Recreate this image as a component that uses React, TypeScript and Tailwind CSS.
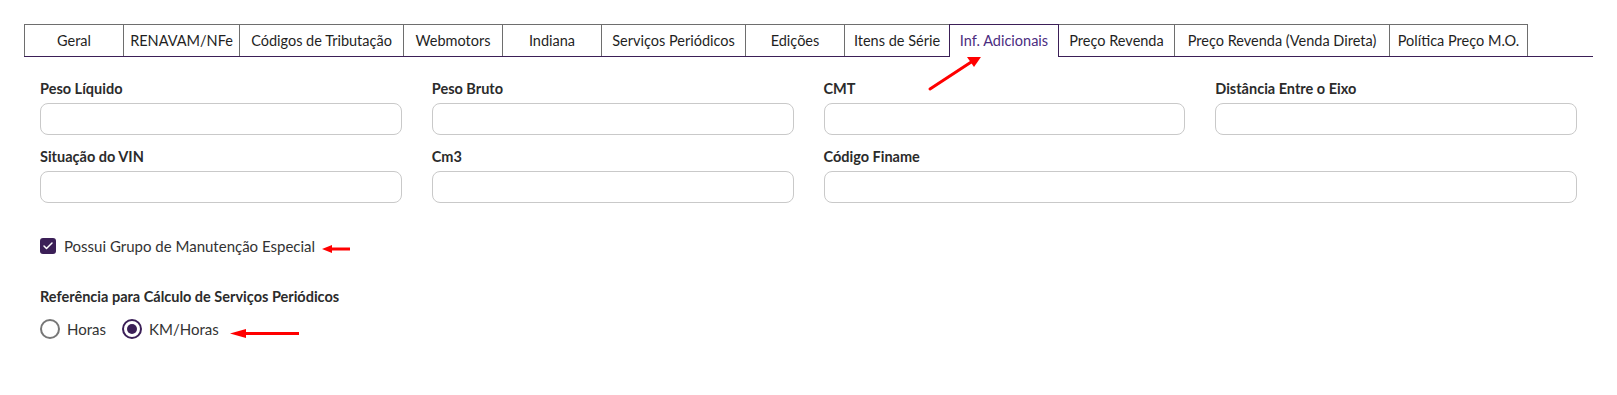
import { Check } from 'lucide-react';

const tabs = [
  { label: 'Geral', w: 'w-[100px]' },
  { label: 'RENAVAM/NFe', w: 'w-[117px]' },
  { label: 'Códigos de Tributação', w: 'w-[165px]' },
  { label: 'Webmotors', w: 'w-[100px]' },
  { label: 'Indiana', w: 'w-[100px]' },
  { label: 'Serviços Periódicos', w: 'w-[145px]' },
  { label: 'Edições', w: 'w-[100px]' },
  { label: 'Itens de Série', w: 'w-[106px]' },
  { label: 'Inf. Adicionais', w: 'w-[110px]', active: true },
  { label: 'Preço Revenda', w: 'w-[117px]' },
  { label: 'Preço Revenda (Venda Direta)', w: 'w-[216px]' },
  { label: 'Política Preço M.O.', w: 'w-[139px]' },
];

function Field({ label, wide }: { label: string; wide?: boolean }) {
  return (
    <div className={wide ? 'col-span-2' : ''}>
      <label className="block text-[14.5px] leading-5 font-bold text-[#2b2b2b] mb-1">{label}</label>
      <input className="block w-full h-8 rounded-lg border border-[#c9c9c9] bg-white outline-none" />
    </div>
  );
}

export default function App() {
  return (
    <div
      className="relative w-full min-h-[395px] bg-white px-6 pt-6"
      style={{ fontFamily: 'Lato, "Open Sans", sans-serif' }}
    >
      {/* abas */}
      <ul className="flex border-b border-[#3b1f57]">
        {tabs.map((t) => (
          <li
            key={t.label}
            className={
              t.active
                ? `${t.w} relative z-10 -ml-px -mb-px h-[33px] flex items-center justify-center border border-b-0 border-[#3b1f57] bg-white text-[14.5px] text-[#4b2d7f] whitespace-nowrap`
                : `${t.w} -ml-px first:ml-0 h-8 flex items-center justify-center border border-b-0 border-[#6e6e6e] text-[14.5px] text-[#1f1f1f] whitespace-nowrap`
            }
          >
            {t.label}
          </li>
        ))}
      </ul>

      <div className="px-4">
        <div className="mt-[22px] grid grid-cols-4 gap-x-[30px] gap-y-3">
          <Field label="Peso Líquido" />
          <Field label="Peso Bruto" />
          <Field label="CMT" />
          <Field label="Distância Entre o Eixo" />
          <Field label="Situação do VIN" />
          <Field label="Cm3" />
          <Field label="Código Finame" wide />
        </div>

        <div className="mt-[33px] flex items-center gap-2 h-5">
          <span className="w-4 h-4 rounded-[3px] bg-[#3b1f57] flex items-center justify-center">
            <Check className="w-3 h-3 text-white" strokeWidth={3} />
          </span>
          <span className="text-[15px] leading-5 text-[#333]">Possui Grupo de Manutenção Especial</span>
        </div>

        <div className="mt-[31px] text-[14.5px] leading-5 font-bold text-[#2b2b2b]">
          Referência para Cálculo de Serviços Periódicos
        </div>

        <div className="mt-[10px] flex items-center h-6 text-[15px] text-[#333]">
          <span className="w-5 h-5 rounded-full border-2 border-[#777]" />
          <span className="ml-[7px]">Horas</span>
          <span className="ml-4 w-5 h-5 rounded-full border-2 border-[#3b1f57] flex items-center justify-center">
            <span className="w-[10px] h-[10px] rounded-full bg-[#3b1f57]" />
          </span>
          <span className="ml-[7px]">KM/Horas</span>
        </div>
      </div>

      {/* setas de anotação */}
      <svg className="absolute inset-0 pointer-events-none" width="1617" height="395">
        <line x1="930" y1="89" x2="972" y2="61.5" stroke="#f00" strokeWidth="3" strokeLinecap="round" />
        <polygon points="982,55.5 967,57 974,67" fill="#f00" />
        <line x1="330" y1="249" x2="350" y2="249" stroke="#f00" strokeWidth="3" />
        <polygon points="322,249 332,245 332,253" fill="#f00" />
        <line x1="244" y1="333.5" x2="299" y2="333.5" stroke="#f00" strokeWidth="3" />
        <polygon points="230,333.5 246,329 246,338" fill="#f00" />
      </svg>
    </div>
  );
}
